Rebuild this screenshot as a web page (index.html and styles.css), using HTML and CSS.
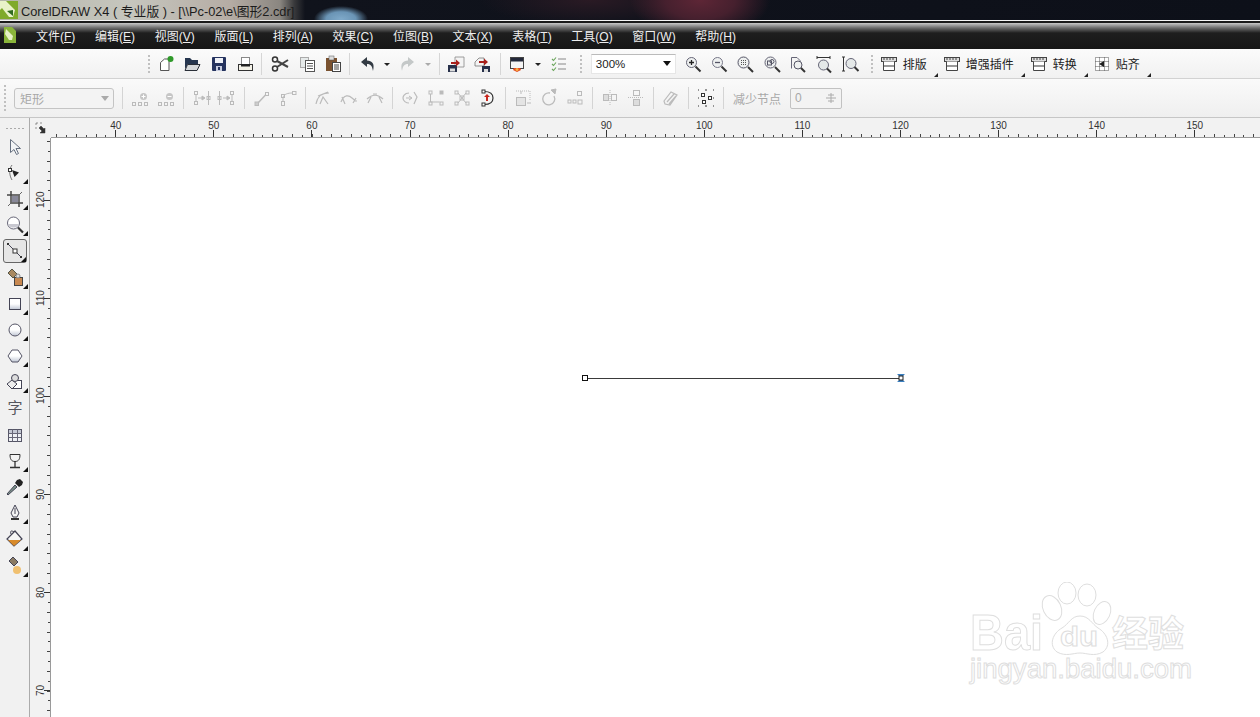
FILE: index.html
```html
<!DOCTYPE html>
<html lang="zh">
<head>
<meta charset="utf-8">
<title>CorelDRAW X4</title>
<link rel="stylesheet" href="styles.css">
</head>
<body>
<div class="app">
  <header class="title">
    <svg class="logo" viewBox="0 0 18 18"><rect width="18" height="18" fill="#7faa2a"/><path d="M0 0h6l9 9-2 7H9L2 7 0 9Z" fill="#e9f2c8"/><path d="M7 10l6-1v6Z" fill="#2f6a1e"/></svg>
    <span class="title-text">CorelDRAW X4 ( 专业版 ) - [\\Pc-02\e\图形2.cdr]</span>
  </header>
  <div class="rule"></div>
  <nav class="menu">
    <svg class="menu-logo" viewBox="0 0 12 16"><path d="M0 0h8l4 4v12H0Z" fill="#8ab53a"/><path d="M2 2l7 7-1 4H5L1 7Z" fill="#e6f0c6"/></svg>
    <span class="mi">文件(<u>F</u>)</span><span class="mi">编辑(<u>E</u>)</span><span class="mi">视图(<u>V</u>)</span><span class="mi">版面(<u>L</u>)</span><span class="mi">排列(<u>A</u>)</span><span class="mi">效果(<u>C</u>)</span><span class="mi">位图(<u>B</u>)</span><span class="mi">文本(<u>X</u>)</span><span class="mi">表格(<u>T</u>)</span><span class="mi">工具(<u>O</u>)</span><span class="mi">窗口(<u>W</u>)</span><span class="mi">帮助(<u>H</u>)</span>
  </nav>

  <div class="bar bar1">
    <i class="grip"></i>
    <span class="b"><svg viewBox="0 0 20 20"><path d="M4.500 16.500V8.500L8.500 5H13V16.500Z" fill="#fff" stroke="#555"/><circle cx="14.500" cy="5" r="3" fill="#2f9a2a"/></svg></span>
    <span class="b"><svg viewBox="0 0 20 20"><path d="M3 4h5l2 2h6v4H6l-3 5Z" fill="#26364f"/><path d="M5.500 10.500H18l-3 6H3Z" fill="#d5d8da" stroke="#2a2f38"/></svg></span>
    <span class="b"><svg viewBox="0 0 20 20"><rect x="3" y="3" width="14" height="14" rx="1" fill="#25335f"/><rect x="6" y="4" width="8" height="5" fill="#eef0f6"/><rect x="7" y="12" width="6" height="5" fill="#c8cde0"/><rect x="9" y="13" width="2" height="3" fill="#25335f"/></svg></span>
    <span class="b"><svg viewBox="0 0 20 20"><rect x="6.500" y="3.500" width="8" height="7" fill="#fff" stroke="#888"/><rect x="3.500" y="10.500" width="14" height="6" fill="#f4f2e8" stroke="#333"/><rect x="6" y="10" width="9" height="2.500" fill="#222"/></svg></span>
    <i class="sep"></i>
    <span class="b"><svg viewBox="0 0 20 20"><circle cx="5" cy="5.500" r="2.500" fill="none" stroke="#333" stroke-width="1.500"/><circle cx="5" cy="14.500" r="2.500" fill="none" stroke="#333" stroke-width="1.500"/><path d="M7 7l11 6M7 13L18 6" stroke="#444" stroke-width="2"/></svg></span>
    <span class="b"><svg viewBox="0 0 20 20"><rect x="3.500" y="3.500" width="8" height="10" fill="#e6eaea" stroke="#aaa"/><rect x="8.500" y="6.500" width="9" height="11" fill="#fff" stroke="#555"/><path d="M10 9.500h6M10 12h6M10 14.500h6" stroke="#555"/></svg></span>
    <span class="b"><svg viewBox="0 0 20 20"><rect x="3" y="4" width="11" height="13" fill="#7a5230"/><rect x="6" y="2" width="5" height="4" fill="#ddd" stroke="#555" stroke-width=".5"/><rect x="9.500" y="8.500" width="8" height="9" fill="#fff" stroke="#444"/><path d="M11 11h5M11 13h5M11 15h5" stroke="#444"/></svg></span>
    <i class="sep"></i>
    <span class="b"><svg viewBox="0 0 20 20"><path d="M9 3L3 8l6 5v-3c4 0 5 2 6 7 2-8-1-10-6-10.500Z" fill="#333b44"/></svg></span>
    <span class="arr"></span>
    <span class="b"><svg viewBox="0 0 20 20"><path d="M11 3l6 5-6 5v-3c-4 0-5 2-6 7-2-8 1-10 6-10.500Z" fill="#c4c8c8"/></svg></span>
    <span class="arr arr-off arr-w"></span>
    <i class="sep sep-n"></i>
    <span class="b"><svg viewBox="0 0 20 20"><path d="M9 3h9v10H9Z" fill="#f4f4f4" stroke="#888" stroke-width=".8"/><rect x="2" y="11" width="9" height="7" fill="#27304a"/><rect x="4" y="14.500" width="5" height="3" fill="#ddd"/><path d="M5 8h5V5.500l4 3.500-4 3.500V10H5Z" fill="#a8201c"/></svg></span>
    <span class="b"><svg viewBox="0 0 20 20"><path d="M3 8l4-4h5v8H3Z" fill="#f4f4f4" stroke="#777" stroke-width=".8"/><rect x="10" y="12" width="8" height="6" fill="#27304a"/><rect x="12" y="15" width="4" height="3" fill="#ddd"/><path d="M7 7h5V4.500l4 3.500-4 3.500V9H7Z" fill="#a8201c"/></svg></span>
    <i class="sep sep-p"></i>
    <span class="b"><svg viewBox="0 0 20 20"><rect x="3.500" y="3.500" width="13" height="11" fill="#f4f4f4" stroke="#444"/><rect x="4" y="4" width="12" height="3.500" fill="#23283a"/><path d="M7 14h6l1 2-2 1-2 1-2-1-2-1Z" fill="#e24a20"/><circle cx="10" cy="15.500" r="1.500" fill="#f5b040"/></svg></span>
    <span class="arr arr-p"></span>
    <span class="b"><svg viewBox="0 0 20 20"><path d="M3 5l1.500 1.500L7 3.500M3 10l1.500 1.500L7 8.500M3 15l1.500 1.500L7 13.500" fill="none" stroke="#6aa55a" stroke-width="1.100"/><path d="M9 5h8M9 10h8M9 15h8" stroke="#888"/></svg></span>
    <i class="grip grip-a"></i>
    <div class="zoom-box"><span>300%</span><b></b></div>
    <span class="b"><svg viewBox="0 0 20 20"><circle cx="8.500" cy="8.500" r="5" fill="#eef0f0" stroke="#667"/><path d="M6 8.500h5M8.500 6v5" stroke="#222" stroke-width="1.300"/><path d="M12.500 12.500l5 5" stroke="#333" stroke-width="2"/></svg></span>
    <span class="b"><svg viewBox="0 0 20 20"><circle cx="8.500" cy="8.500" r="5" fill="#eef0f0" stroke="#778"/><path d="M6 8.500h5" stroke="#556" stroke-width="1.300"/><path d="M12.500 12.500l5 5" stroke="#333" stroke-width="2"/></svg></span>
    <span class="b"><svg viewBox="0 0 20 20"><circle cx="8.500" cy="8.500" r="5.500" fill="#eef0f0" stroke="#556"/><path d="M6 6.500h5M6 8.500h5M6 10.500h5" stroke="#555" stroke-dasharray="1 1"/><path d="M13 13l5 5" stroke="#333" stroke-width="2"/></svg></span>
    <span class="b"><svg viewBox="0 0 20 20"><circle cx="8.500" cy="8.500" r="5.500" fill="#eef0f0" stroke="#667"/><rect x="5.500" y="7" width="4" height="4" fill="none" stroke="#556"/><circle cx="10" cy="7.500" r="2" fill="none" stroke="#556"/><path d="M13 13l5 5" stroke="#333" stroke-width="2"/></svg></span>
    <span class="b"><svg viewBox="0 0 20 20"><path d="M3.500 14.500V3.500H9L12 6.500V9" fill="#f4f4f4" stroke="#667"/><circle cx="10" cy="11" r="4" fill="#eef0f0" stroke="#556"/><path d="M13 14l4 4" stroke="#333" stroke-width="2"/></svg></span>
    <span class="b"><svg viewBox="0 0 20 20"><path d="M3 3.500h13M3 2v3M16 2v3" stroke="#333"/><circle cx="9.500" cy="11" r="5" fill="#e4e8e8" stroke="#667"/><path d="M13 14.500l4 4" stroke="#333" stroke-width="2"/></svg></span>
    <span class="b"><svg viewBox="0 0 20 20"><path d="M3.500 3v14M2 3h3M2 17h3" stroke="#333"/><circle cx="11" cy="9.500" r="5" fill="#e4e8e8" stroke="#667"/><path d="M14.500 13l4 4" stroke="#333" stroke-width="2"/></svg></span>
    <i class="grip grip-b"></i>
    <span class="tb"><svg viewBox="0 0 18 18"><rect x="1.500" y="2.500" width="15" height="4" fill="#ddd" stroke="#444"/><path d="M4 3v2M7 3v2M10 3v2M13 3v2" stroke="#444"/><path d="M3.500 6.500v9h11v-9" fill="#fff" stroke="#444"/><rect x="4" y="10" width="10" height="2" fill="#999"/></svg><span>排版</span></span>
    <span class="tb"><svg viewBox="0 0 18 18"><rect x="1.500" y="2.500" width="15" height="4" fill="#ddd" stroke="#444"/><path d="M4 3v2M7 3v2M10 3v2M13 3v2" stroke="#444"/><path d="M3.500 6.500v9h11v-9" fill="#fff" stroke="#444"/><rect x="4" y="10" width="10" height="2" fill="#999"/></svg><span>增强插件</span></span>
    <span class="tb"><svg viewBox="0 0 18 18"><rect x="1.500" y="2.500" width="15" height="4" fill="#ddd" stroke="#444"/><path d="M4 3v2M7 3v2M10 3v2M13 3v2" stroke="#444"/><path d="M3.500 6.500v9h11v-9" fill="#fff" stroke="#444"/><rect x="4" y="10" width="10" height="2" fill="#999"/></svg><span>转换</span></span>
    <span class="tb"><svg viewBox="0 0 18 18"><path d="M2.500 2.500h13v13h-13ZM2.500 6.500h13M2.500 11.500h13M6.500 2.500v13M11.500 2.500v13" fill="#fff" stroke="#555" stroke-dasharray="1 1"/><path d="M11 6v6L6 9Z" fill="#222"/></svg><span>贴齐</span></span>
  </div>

  <div class="bar bar2">
    <i class="grip grip-2"></i>
    <div class="shape-box"><span>矩形</span><b></b></div>
    <i class="sep2 sep2-first"></i>
    <span class="c"><svg viewBox="0 0 20 20"><rect x="2.500" y="14.500" width="3" height="3"/><rect x="8.500" y="14.500" width="3" height="3"/><rect x="14.500" y="14.500" width="3" height="3"/><circle cx="13.500" cy="8.500" r="3.500" fill="#c6c6c6" stroke="none"/><path d="M11.500 8.500h4M13.500 6.500v4" stroke="#fff"/></svg></span>
    <span class="c"><svg viewBox="0 0 20 20"><rect x="2.500" y="14.500" width="3" height="3"/><rect x="8.500" y="14.500" width="3" height="3"/><rect x="14.500" y="14.500" width="3" height="3"/><circle cx="13.500" cy="8.500" r="3.500" fill="#c6c6c6" stroke="none"/><path d="M11.500 8.500h4" stroke="#fff"/></svg></span>
    <i class="sep2"></i>
    <span class="c"><svg viewBox="0 0 20 20"><rect x="3.500" y="3.500" width="3" height="3"/><rect x="3.500" y="13.500" width="3" height="3"/><path d="M5 6.500v7M17.500 3v14M7 10h5"/><rect x="16" y="8.500" width="3" height="3"/><path d="M11 8l3 2-3 2Z" fill="#bbb"/></svg></span>
    <span class="c"><svg viewBox="0 0 20 20"><rect x="13.500" y="3.500" width="3" height="3"/><rect x="13.500" y="13.500" width="3" height="3"/><path d="M15 6.500v7M2.500 3v14M6 10h5"/><rect x="1" y="8.500" width="3" height="3"/><path d="M10 8l3 2-3 2Z" fill="#bbb"/></svg></span>
    <i class="sep2"></i>
    <span class="c"><svg viewBox="0 0 20 20"><rect x="13.500" y="4.500" width="3" height="3"/><path d="M13.500 7L6 15" stroke-width="1.500"/><rect x="3" y="14" width="3.500" height="3.500" fill="#ccc"/></svg></span>
    <span class="c"><svg viewBox="0 0 20 20"><rect x="14.500" y="3.500" width="3.500" height="3"/><rect x="3.500" y="13.500" width="3" height="4"/><rect x="3.500" y="6.500" width="3" height="3"/><path d="M14.500 5C10 5 6 6 5 9.500M5 9.500v4"/></svg></span>
    <i class="sep2"></i>
    <span class="c"><svg viewBox="0 0 20 20"><path d="M3 16C4 9 9 5 16 5M7 16l3-7 5 7M5 8l10-4" stroke-width="1.200"/></svg></span>
    <span class="c"><svg viewBox="0 0 20 20"><path d="M2 14C5 6 10 7 13 10s4 3 5 3M3 9l3 7M14 15l3-5" stroke-width="1.200"/></svg></span>
    <span class="c"><svg viewBox="0 0 20 20"><path d="M2 11c5-5 11-5 16 0M3 15l3-6M17 15l-3-6M8 6h4" stroke-width="1.200"/></svg></span>
    <i class="sep2"></i>
    <span class="c"><svg viewBox="0 0 20 20"><path d="M9 5C4 5 3 9 3 10c0 3 3 5 6 5M14 4l3 5-3 7" stroke-width="1.200"/><path d="M6 10h5M9 8l3 2-3 2"/></svg></span>
    <span class="c"><svg viewBox="0 0 20 20"><rect x="3" y="3" width="3" height="3"/><rect x="14" y="3" width="3" height="3" fill="#bbb"/><rect x="14" y="14" width="3" height="3"/><rect x="3" y="14" width="3" height="3"/><path d="M4.500 6v8h9"/></svg></span>
    <span class="c"><svg viewBox="0 0 20 20"><rect x="3" y="3" width="3" height="3"/><rect x="14" y="3" width="3" height="3"/><rect x="3" y="14" width="3" height="3"/><rect x="14" y="14" width="3" height="3"/><path d="M6 5l8 10M14 5L6 15M8 8h4v4H8Z"/></svg></span>
    <span class="c"><svg viewBox="0 0 20 20"><path d="M6 3.500c7 0 9 3 9 6.500s-2 6.500-9 6.500" fill="none" stroke="#333" stroke-width="1.200"/><rect x="4" y="2" width="3" height="3" fill="#fff" stroke="#333"/><rect x="4" y="15" width="3" height="3" fill="#fff" stroke="#333"/><path d="M9 6l3 3h-2v4H8V9H6Z" fill="#c8281e" stroke="none"/></svg></span>
    <i class="sep2"></i>
    <span class="c"><svg viewBox="0 0 20 20"><path d="M3 3h14v10" stroke-dasharray="1 1"/><rect x="3.500" y="9.500" width="9" height="8" fill="#e4e4e4"/><path d="M14 15h4M8 6V3"/></svg></span>
    <span class="c"><svg viewBox="0 0 20 20"><path d="M15 8a6 6 0 1 1-4-3" stroke-width="1.300"/><path d="M12 2l5-1-1 5Z" fill="#bbb"/></svg></span>
    <span class="c"><svg viewBox="0 0 20 20"><rect x="12.500" y="3.500" width="4" height="4"/><rect x="3" y="12" width="3" height="3"/><rect x="8" y="12" width="3" height="3"/><rect x="13" y="12" width="4" height="4"/></svg></span>
    <i class="sep2"></i>
    <span class="c"><svg viewBox="0 0 20 20"><rect x="3.500" y="6.500" width="5" height="6" fill="#ddd"/><rect x="11.500" y="6.500" width="5" height="6"/><path d="M10 2v16" stroke-dasharray="1 1"/></svg></span>
    <span class="c"><svg viewBox="0 0 20 20"><rect x="7.500" y="2.500" width="6" height="5"/><rect x="7.500" y="11.500" width="6" height="6" fill="#ddd"/><path d="M2 9.500h16" stroke-dasharray="1 1"/></svg></span>
    <i class="sep2"></i>
    <span class="c"><svg viewBox="0 0 20 20"><path d="M3 13l7-9 6 3-7 10-5-1ZM6 14l7-8M8 16l7-8" stroke-width="1.200"/></svg></span>
    <i class="sep2"></i>
    <span class="c"><svg viewBox="0 0 20 20"><path d="M2 2h1M9 2h2M17 2h1M2 10h1M17 10h1M2 18h1M9 18h2M17 18h1" stroke="#333"/><rect x="5.500" y="5.500" width="3" height="3" fill="#fff" stroke="#333"/><rect x="12.500" y="8.500" width="3" height="3" fill="#fff" stroke="#333"/><rect x="6.500" y="12.500" width="3" height="3" fill="#fff" stroke="#333"/></svg></span>
    <i class="sep2"></i>
    <span class="reduce">减少节点</span>
    <div class="num-box"><span>0</span><svg viewBox="0 0 12 12"><path d="M1 6h10M6 1v10M3 3h6M3 9h6" stroke="#aaa"/></svg></div>
  </div>

  <main class="work">
    <aside class="tools">
      <i class="tools-grip"></i>
      <span class="t"><svg viewBox="0 0 20 20"><path d="M5.500 2.500v13l3.500-3 2.500 5 2-1-2.500-5h4.500Z" fill="#f2f4f6" stroke="#667080"/></svg></span>
      <span class="t m"><svg viewBox="0 0 20 20"><path d="M7 2C4 6 4 12 7 17" fill="none" stroke="#777"/><rect x="3.500" y="5.500" width="3" height="3" fill="#fff" stroke="#333"/><path d="M7 7l7 2.500-4.500 4.500Z" fill="#222"/></svg></span>
      <span class="t m"><svg viewBox="0 0 20 20"><path d="M6 2v12h12M2 6h12v12" fill="none" stroke="#444" stroke-width="1.500"/><path d="M3 17L17 3" stroke="#666"/><rect x="7" y="7" width="6" height="6" fill="#889"/></svg></span>
      <span class="t m"><svg viewBox="0 0 20 20"><circle cx="8.500" cy="8" r="6" fill="#fff" stroke="#667"/><path d="M3 9a6 6 0 0 0 11 0Z" fill="#c8c8d0"/><path d="M13 12.500l5 5" stroke="#333" stroke-width="2.200"/></svg></span>
      <span class="t m on"><svg viewBox="0 0 20 20"><path d="M3 3l14 14" stroke="#445"/><rect x="8" y="8" width="4" height="4" fill="#fff" stroke="#333"/><rect x="2" y="2" width="2" height="2" fill="#333"/><rect x="15" y="15" width="2" height="2" fill="#333"/></svg></span>
      <span class="t m"><svg viewBox="0 0 20 20"><path d="M7 1l5 5-4 4-5-5Z" fill="#a88860" stroke="#554"/><rect x="9.500" y="9.500" width="8" height="8" fill="#c88850" stroke="#444"/><circle cx="13" cy="8" r="2" fill="#ddd" stroke="#888"/></svg></span>
      <span class="t m"><svg viewBox="0 0 20 20"><rect x="4.500" y="4.500" width="11" height="11" fill="url(#gr)" stroke="#445"/><defs><linearGradient id="gr" x1="0" y1="0" x2="0" y2="1"><stop offset=".5" stop-color="#fff"/><stop offset="1" stop-color="#c0c6d4"/></linearGradient></defs></svg></span>
      <span class="t m"><svg viewBox="0 0 20 20"><circle cx="10" cy="10" r="6" fill="url(#gr)" stroke="#556"/></svg></span>
      <span class="t m"><svg viewBox="0 0 20 20"><path d="M7 4h6l4 6-4 6H7l-4-6Z" fill="url(#gr)" stroke="#556"/></svg></span>
      <span class="t m"><svg viewBox="0 0 20 20"><rect x="8.500" y="8.500" width="8" height="8" fill="#fff" stroke="#445"/><path d="M7 8l5 4-5 5-5-5Z" fill="#eee" stroke="#445"/><circle cx="10" cy="6" r="3.500" fill="#ddd" stroke="#445"/></svg></span>
      <span class="t glyph">字</span>
      <span class="t"><svg viewBox="0 0 20 20"><rect x="3.500" y="4.500" width="13" height="12" fill="#eef0f4" stroke="#556"/><rect x="4" y="5" width="12" height="3" fill="#c4c8d4"/><path d="M3.500 8.500h13M3.500 12.500h13M7.500 4.500v12M12.500 4.500v12" stroke="#667"/></svg></span>
      <span class="t m"><svg viewBox="0 0 20 20"><path d="M5 3.500h10c0 4-1 7-5 7s-5-3-5-7Z" fill="#f4f4f4" stroke="#333"/><path d="M10 10.500V16M5 16.500h10" stroke="#333" stroke-width="1.300"/></svg></span>
      <span class="t m"><svg viewBox="0 0 20 20"><path d="M3 18l-1-1 8-9 2 2Z" fill="#7a9088" stroke="#445"/><path d="M10 6l4 4 3-2 1-3-3-3-3 1Z" fill="#222"/></svg></span>
      <span class="t m"><svg viewBox="0 0 20 20"><path d="M10 2l4 8-2 4H8L6 10Z" fill="#f4f4f4" stroke="#445"/><path d="M10 5v6" stroke="#445"/><rect x="6" y="15" width="8" height="2" fill="#333"/></svg></span>
      <span class="t m"><svg viewBox="0 0 20 20"><path d="M10 2L2 10l7 7 8-7Z" fill="#f6f6f6" stroke="#445" stroke-width="1.200"/><path d="M3 11h13l-7 6Z" fill="#d88a2a"/><path d="M9 3C6 1 5 2 6 5" fill="none" stroke="#445"/></svg></span>
      <span class="t m"><svg viewBox="0 0 20 20"><path d="M8 1l5 5-4 4-5-5Z" fill="#8a7a62" stroke="#445"/><circle cx="12" cy="14" r="4" fill="#f0c070"/></svg></span>
    </aside>
    <div class="corner"><svg viewBox="0 0 12 12"><path d="M1 1h2M1 1v2M5 1h2M1 5v2M10 6v5h-5l2-2-3-3 2-2 3 3Z" fill="#333" stroke="#333" stroke-width=".5"/></svg></div>
    <div class="hruler">
      <span>40</span><span>50</span><span>60</span><span>70</span><span>80</span><span>90</span><span>100</span><span>110</span><span>120</span><span>130</span><span>140</span><span>150</span>
    </div>
    <div class="vruler">
      <span>120</span><span>110</span><span>100</span><span>90</span><span>80</span><span>70</span>
    </div>
    <section class="canvas">
      <div class="line"></div>
      <div class="node"></div>
      <svg class="node-end" viewBox="0 0 10 10"><path d="M1 1h8L6 4v2l3 3H1l3-3V4Z" fill="#3a7fc0"/><rect x="3" y="3" width="4" height="4" fill="#fff" stroke="#222"/></svg>
      <svg class="mark" viewBox="0 0 240 115">
        <g fill="#fff" stroke="#dedede">
          <ellipse cx="85" cy="26" rx="9" ry="13" transform="rotate(-25 85 26)"/>
          <ellipse cx="100" cy="11" rx="9" ry="11"/>
          <ellipse cx="120" cy="13" rx="9" ry="11"/>
          <ellipse cx="135" cy="31" rx="8" ry="12" transform="rotate(25 135 31)"/>
          <path d="M90 70c-9-7-4-19 5-24 7-4 9-12 18-12s12 8 18 12c9 5 14 17 5 24-9 5-16 1-23 1s-14 4-23-1Z"/>
          <text x="3" y="68" class="mk" textLength="73" lengthAdjust="spacingAndGlyphs">Bai</text>
          <text x="93" y="64" class="mk mk-du" textLength="38" lengthAdjust="spacingAndGlyphs">du</text>
          <text x="145" y="65" class="mk mk-cn">经验</text>
          <text x="3" y="96" class="mk mk-url" textLength="222" lengthAdjust="spacingAndGlyphs">jingyan.baidu.com</text>
        </g>
      </svg>
    </section>
  </main>
</div>
</body>
</html>
```
FILE: styles.css
```css
* { box-sizing: border-box; }
html, body { margin: 0; height: 100%; overflow: hidden; background: #fff; }
body { font-family: "Liberation Sans", "Noto Sans CJK SC", sans-serif; font-size: 12px; color: #222; }
.app { width: 1260px; height: 717px; display: flex; flex-direction: column; overflow: hidden; }
i { display: block; font-style: normal; }

/* title bar */
.title {
  height: 20px; display: flex; align-items: center; gap: 3px;
  background:
    radial-gradient(ellipse 27px 13px at 341px 19px, #7fa9c9 0, #6a94b5 55%, transparent 100%),
    radial-gradient(ellipse 70px 38px at 700px 0, #5e2636 0, #46202e 50%, transparent 100%),
    radial-gradient(ellipse 110px 26px at 590px 0, #2a1a24 0, transparent 100%),
    linear-gradient(90deg, #b4b6a8 0, #c6c6be 130px, #b5aca4 230px, #8a8680 280px, #3a3a3c 294px, #10131c 305px, #0d1019 100%);
}
.logo { width: 18px; height: 18px; flex: none; }
.title-text { font-size: 12.800px; color: #1c1c1c; white-space: nowrap; }
.rule { height: 3px; flex: none; background: linear-gradient(#f4f4f4 0 1px, #1a1a1a 1px); }

/* menu */
.menu {
  height: 26px; flex: none; display: flex; align-items: center; padding: 0 0 2px 4px;
  background: linear-gradient(#c9c9c9 0, #6a6a6a 5px, #1e1e1e 10px, #161616 100%);
  color: #eee; font-size: 12px;
}
.menu-logo { width: 12px; height: 16px; flex: none; margin-right: 20px; }
.mi { margin-right: 19.700px; white-space: nowrap; }

/* toolbars */
.bar { display: flex; align-items: center; flex: none; }
.bar1 { height: 30px; padding-left: 148px; background: linear-gradient(#fbfbfb, #f1f1f1); border-bottom: 1px solid #d2d2d2; }
.bar2 { height: 39px; padding-left: 4px; background: linear-gradient(#fafafa, #efefef); border-bottom: 1px solid #c6c6c6; }
.grip { width: 2px; height: 18px; margin-right: 3px; background: repeating-linear-gradient(#c0c0c0 0 2px, transparent 2px 4px); }
.grip-a { margin: 0 9px 0 8px; }
.grip-b { margin: 0 7px; }
.grip-2 { height: 26px; margin-right: 8px; }
.b { width: 26.300px; height: 22px; flex: none; display: flex; align-items: center; justify-content: center; }
.b svg, .c svg { width: 20px; height: 20px; display: block; }
.sep { width: 1px; height: 22px; margin: 0 5px 0 3px; background: #d6d6d6; }
.sep-n { margin: 0 3px 0 3px; }
.sep-p { margin: 0 3px 0 5px; }
.arr { width: 12px; height: 22px; flex: none; position: relative; }
.arr::after { content: ""; position: absolute; left: 3px; top: 10px; border: 3px solid transparent; border-top: 3px solid #222; border-bottom: 0; }
.arr-off::after { border-top-color: #aaa; }
.arr-w { width: 16px; }
.arr-w::after { left: 5px; }
.arr-p { width: 15px; }
.arr-p::after { left: 4px; }
.zoom-box { width: 85px; height: 20px; margin-right: 3.700px; flex: none; background: #fff; border: 1px solid #e6e6e6; border-top-color: #bbb; display: flex; align-items: center; justify-content: space-between; padding: 0 4px; font-size: 11.500px; color: #222; }
.zoom-box b, .shape-box b { width: 0; height: 0; border: 4px solid transparent; border-top: 5px solid #111; border-bottom: 0; }
.tb { display: flex; align-items: center; gap: 5px; padding-right: 14px; margin-right: 2px; height: 26px; position: relative; font-size: 12px; color: #222; flex: none; }
.tb svg { width: 18px; height: 18px; flex: none; }
.tb::after { content: ""; position: absolute; right: 3px; bottom: 0; border-style: solid; border-width: 0 0 4px 4px; border-color: transparent transparent #222 transparent; }

.shape-box { width: 100px; height: 21px; flex: none; border: 1px solid #c4c4c4; border-radius: 3px; background: #f3f3f3; display: flex; align-items: center; justify-content: space-between; padding: 0 4px 0 5px; color: #a8a8a8; font-size: 12px; }
.shape-box b { border-top-color: #aaa; }
.sep2 { width: 1px; height: 22px; margin: 0 4px; flex: none; background: #d4d4d4; }
.sep2-first { margin-left: 8px; }
.c { width: 26px; height: 24px; flex: none; display: flex; align-items: center; justify-content: center; }
.c svg { fill: none; stroke: #bbb; }
.reduce { margin-left: 5px; margin-right: 9px; color: #a8a8a8; font-size: 12px; white-space: nowrap; }
.num-box { width: 52px; height: 21px; border: 1px solid #c2c2c2; border-radius: 2px; background: #f3f3f3; color: #a8a8a8; display: flex; align-items: center; justify-content: space-between; padding: 0 4px; flex: none; }
.num-box svg { width: 12px; height: 12px; }

/* workspace */
.work { flex: 1; min-height: 0; display: grid; grid-template-columns: 30px 21px 1fr; grid-template-rows: 20px 1fr; background: #fff; }
.tools { grid-row: 1 / 3; background: #f1f1f1; border-right: 1px solid #ababab; display: flex; flex-direction: column; align-items: center; padding-top: 15.500px; position: relative; }
.tools-grip { position: absolute; left: 6px; top: 10px; width: 18px; height: 1px; background: repeating-linear-gradient(90deg, #aaa 0 2px, transparent 2px 4px); }
.t { width: 24px; height: 26.200px; flex: none; display: flex; align-items: center; justify-content: center; position: relative; margin-left: 1px; }
.t svg { width: 20px; height: 20px; display: block; }
.m::after { content: ""; position: absolute; right: -1px; bottom: 2px; border-style: solid; border-width: 0 0 5px 5px; border-color: transparent transparent #111 transparent; }
.on { border: 1px solid #666; border-radius: 3px; background: #e6e6e6; height: 24px; margin: 1px 0 1.200px 1px; }
.on::after { right: 0; bottom: 0; }
.glyph { font-size: 15px; color: #55575e; font-family: "Noto Sans CJK SC", sans-serif; padding-bottom: 3px; }
.corner { background: #f2f2f2; display: flex; align-items: center; justify-content: center; border-bottom: 1px solid #f2f2f2; }
.corner svg { width: 12px; height: 12px; }
.hruler {
  display: flex; padding-left: 15.700px; overflow: hidden; font-size: 10px; color: #333; line-height: 12px; padding-top: 2px;
  background-color: #f2f2f2; background-repeat: no-repeat;
  background-image:
    repeating-linear-gradient(90deg, #333 64.3px, #333 65.3px, transparent 65.3px, transparent 162.4px),
    repeating-linear-gradient(90deg, #444 5.44px, #444 6.44px, transparent 6.44px, transparent 15.25px),
    repeating-linear-gradient(90deg, #444 5.44px, #444 6.44px, transparent 6.44px, transparent 25.06px);
  background-size: 100% 7px, 100% 2px, 100% 3px;
  background-position: 0 100%, 0 100%, 0 100%;
  border-bottom: 1px solid #9a9a9a;
}
.hruler span { flex: 0 0 98.1px; text-align: center; }
.vruler {
  display: flex; flex-direction: column; padding-top: 13px; overflow: hidden; font-size: 10px; color: #333;
  background-color: #f2f2f2; background-repeat: no-repeat;
  background-image:
    repeating-linear-gradient(180deg, #333 62px, #333 63px, transparent 63px, transparent 160.1px),
    repeating-linear-gradient(180deg, #444 3.14px, #444 4.14px, transparent 4.14px, transparent 12.95px),
    repeating-linear-gradient(180deg, #444 3.14px, #444 4.14px, transparent 4.14px, transparent 22.76px);
  background-size: 6px 100%, 2px 100%, 3px 100%;
  background-position: 100% 0, 100% 0, 100% 0;
  border-right: 1px solid #9a9a9a;
}
.vruler span { flex: 0 0 98.1px; display: flex; align-items: center; justify-content: center; writing-mode: vertical-rl; transform: rotate(180deg); }
.canvas { position: relative; background: #fff; overflow: hidden; }

/* objects on the drawing page (canvas origin is 51,138) */
.line { position: absolute; left: 534px; top: 239.500px; width: 316px; height: 1px; background: #3a3a3a; }
.node { position: absolute; left: 531px; top: 237px; width: 6px; height: 6px; background: #fff; border: 1px solid #111; }
.node-end { position: absolute; left: 845px; top: 235px; width: 10px; height: 10px; }
.mark { position: absolute; left: 916px; top: 444px; width: 240px; height: 115px; }
.mk { font-family: "Liberation Sans", sans-serif; font-size: 50px; font-weight: 700; }
.mk-du { font-size: 27px; }
.mk-cn { font-family: "Noto Sans CJK SC", sans-serif; font-size: 36px; font-weight: 700; }
.mk-url { font-size: 27px; font-weight: 400; }
```
